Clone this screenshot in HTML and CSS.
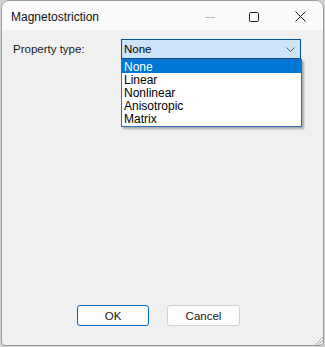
FILE: index.html
```html
<!DOCTYPE html>
<html lang="en">
<head>
  <meta charset="UTF-8" />
  <title>Magnetostriction</title>
  <link rel="stylesheet" href="styles.css">
</head>
<body>

<div class="window">

  <div class="titlebar">
    <span class="title">Magnetostriction</span>
    <div class="controls">
      <span class="ctl minimize">
        <svg width="10" height="10" viewBox="0 0 10 10"><path d="M0 5.5h10" stroke="#b8b8b8" stroke-width="1"/></svg>
      </span>
      <span class="ctl">
        <svg width="10" height="10" viewBox="0 0 10 10"><rect x="0.5" y="0.5" width="9" height="9" rx="1.2" fill="none" stroke="#1b1b1b" stroke-width="1"/></svg>
      </span>
      <span class="ctl">
        <svg width="11" height="11" viewBox="0 0 11 11"><path d="M0.5 0.5L10.5 10.5M10.5 0.5L0.5 10.5" stroke="#1b1b1b" stroke-width="1"/></svg>
      </span>
    </div>
  </div>

  <div class="content">
    <div class="form-row">
      <label class="field-label">Property type:</label>
      <div class="combo">
        <span class="combo-value">None</span>
        <svg class="chevron" width="9" height="5" viewBox="0 0 9 5"><path d="M0.5 0.5L4.5 4.5L8.5 0.5" fill="none" stroke="#4a5a6a" stroke-width="1"/></svg>

        <!-- open drop-down list -->
        <ul class="dropdown">
          <li class="selected">None</li>
          <li>Linear</li>
          <li>Nonlinear</li>
          <li>Anisotropic</li>
          <li>Matrix</li>
        </ul>
      </div>
    </div>
  </div>

  <div class="buttons">
    <button class="btn btn-default">OK</button>
    <button class="btn">Cancel</button>
  </div>

  <svg class="grip" width="10" height="10" viewBox="0 0 10 10">
    <path d="M10 2L2 10M10 5L5 10M10 8L8 10" stroke="#b0b0b0" stroke-width="1"/>
  </svg>

</div>

</body>
</html>
```

FILE: styles.css
```css
body {
  margin: 0;
  background: #d2d2d2;
  font-family: 'Liberation Sans', Arial, sans-serif;
  color: #000;
}

.window {
  position: relative;
  box-sizing: border-box;
  margin-left: 1px;
  width: 323px;
  height: 346px;
  border: 1px solid #9c9c9c;
  border-radius: 8px 8px 4px 4px;
  background: #f0f0f0;
  display: flex;
  flex-direction: column;
  overflow: hidden;
}

.titlebar {
  height: 29px;
  background: #fafafa;
  display: flex;
  align-items: center;
  padding-left: 9px;
}

.title {
  font-size: 12px;
  color: #111;
  margin-top: 2px;
}

.controls {
  margin-left: auto;
  display: flex;
  align-items: center;
  height: 100%;
}

.ctl {
  width: 46px;
  display: flex;
  justify-content: center;
  align-items: center;
  margin-top: 2px;
}

.minimize {
  margin-right: -2px;
}

.content {
  flex: 1;
  padding: 9px 0 0 11px;
}

.form-row {
  display: flex;
  align-items: center;
}

.field-label {
  width: 108px;
  font-size: 11.5px;
  color: #1a1a1a;
}

.combo {
  position: relative;
  box-sizing: border-box;
  width: 180px;
  height: 20px;
  background: #cce4f7;
  border: 1px solid #005499;
  display: flex;
  align-items: center;
  padding-left: 2px;
}

.combo-value {
  font-size: 11.5px;
}

.chevron {
  margin-left: auto;
  margin-right: 5px;
}

.dropdown {
  position: absolute;
  left: -1px;
  top: 19px;
  box-sizing: border-box;
  width: 181px;
  margin: 0;
  padding: 0;
  list-style: none;
  background: #fff;
  border: 1px solid #2d6bb3;
  box-shadow: 2px 2px 2px rgba(0, 0, 0, 0.3);
  z-index: 10;
}

.dropdown li {
  height: 13px;
  line-height: 14px;
  padding-left: 2px;
  font-size: 12px;
}

.dropdown li.selected {
  background: #0078d7;
  color: #fff;
}

.dropdown li:last-child {
  height: 14px;
}

.buttons {
  display: flex;
  gap: 18px;
  padding-left: 75px;
  margin-bottom: 19px;
}

.btn {
  box-sizing: border-box;
  width: 73px;
  height: 21px;
  padding: 0;
  background: #fdfdfd;
  border: 1px solid #d0d0d0;
  border-radius: 3px;
  font-family: 'Liberation Sans', Arial, sans-serif;
  font-size: 11.5px;
  color: #1a1a1a;
}

.btn-default {
  width: 72px;
  border-color: #0067c0;
}

.grip {
  position: absolute;
  right: 0;
  bottom: 0;
}
```
